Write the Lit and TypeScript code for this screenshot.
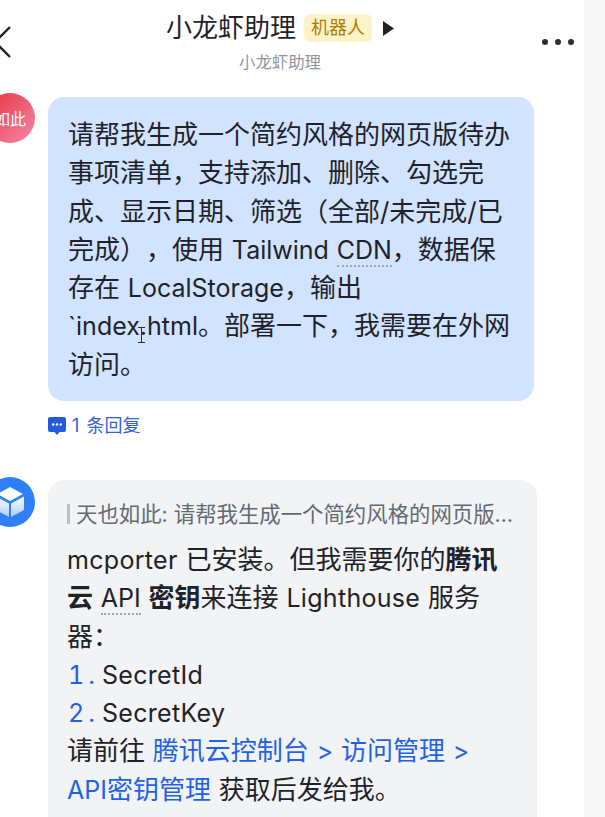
import { LitElement, html, css } from 'lit';
import { customElement } from 'lit/decorators.js';

@customElement('app-root')
export class AppRoot extends LitElement {
  static styles = css`
    :host {
      display: block;
      position: relative;
      width: 605px;
      height: 817px;
      overflow: hidden;
      background: #f7f7f8;
      font-family: "Inter", "Noto Sans CJK SC", sans-serif;
      color: #1f2329;
      text-spacing-trim: space-all;
    }
    svg { display: block; }
    .page {
      width: 584px;
      height: 817px;
      background: #fff;
      overflow: hidden;
    }
    .header {
      height: 97px;
      display: grid;
      grid-template-columns: 24px 1fr 48px;
    }
    .back { padding-top: 26px; margin-left: -6px; }
    .titles {
      display: flex;
      flex-direction: column;
      align-items: center;
      padding-top: 13px;
    }
    .title-row { display: flex; align-items: center; gap: 8px; height: 30px; }
    .title { font-size: 26px; line-height: 30px; }
    .tag {
      background: #fdf3c9;
      color: #b07d00;
      font-size: 18px;
      line-height: 28px;
      padding: 0 7px;
      border-radius: 6px;
    }
    .arrow { margin-left: 3px; }
    .sub { font-size: 16.4px; color: #8f959e; line-height: 22px; margin-top: 8px; }
    .more { padding-top: 38px; margin-left: 6px; }
    .row { display: flex; }
    .avatar-wrap { width: 48px; flex: none; position: relative; }
    .avatar {
      position: absolute;
      left: -15px;
      top: -4px;
      width: 50px;
      height: 50px;
      border-radius: 50%;
      background: linear-gradient(135deg, #e8313f, #f58aa8);
      color: #fff;
      font-size: 16px;
      display: flex;
      align-items: center;
      justify-content: center;
      white-space: nowrap;
    }
    .avatar.bot { top: -3px; background: #2f80f8; }
    .bubble {
      box-sizing: border-box;
      width: 486px;
      height: 304px;
      background: #d1e3ff;
      border-radius: 16px;
      padding: 19px 20px 0;
      font-size: 26px;
      line-height: 38.3px;
      word-spacing: 0.5px;
      white-space: nowrap;
    }
    .en { font-size: 25px; }
    .wide { letter-spacing: 0.3px; }
    .hint { border-bottom: 2px dotted #a0a5ad; }
    .reply {
      display: flex;
      align-items: center;
      gap: 6px;
      margin: 15px 0 0 48px;
      height: 20px;
      color: #2f62e0;
      font-size: 18px;
      line-height: 20px;
      word-spacing: 2px;
    }
    .bot-row { margin-top: 44px; }
    .card {
      box-sizing: border-box;
      width: 489px;
      height: 400px;
      background: #f2f3f5;
      border-radius: 16px;
      padding: 19px 19px 0;
      font-size: 26px;
      line-height: 38.3px;
      word-spacing: 0.5px;
      white-space: nowrap;
    }
    .quote {
      display: flex;
      align-items: center;
      gap: 6px;
      color: #646a73;
      font-size: 21.4px;
      line-height: 30px;
      margin-bottom: 12px;
      word-spacing: 0;
    }
    .quote i { width: 3px; height: 20px; background: #bbbfc4; flex: none; }
    b { font-weight: 700; }
    .item { display: flex; height: 38.3px; }
    .num {
      color: #1f62ea;
      display: flex;
      justify-content: flex-end;
      gap: 4px;
      width: 28px;
      margin-right: 7px;
      font-size: 25px;
      font-variant-numeric: tabular-nums;
    }
    .link { color: #1f62ea; }
    .cursor { position: absolute; left: 138px; top: 327px; }
  `;

  render() {
    return html`
      <div class="page">
        <div class="header">
          <div class="back">
            <svg width="18" height="32" viewBox="0 0 18 32">
              <path d="M16 1 L1 16 L16 31" fill="none" stroke="#1f2329" stroke-width="2.4" />
            </svg>
          </div>
          <div class="titles">
            <div class="title-row">
              <span class="title">小龙虾助理</span>
              <span class="tag">机器人</span>
              <svg class="arrow" width="11" height="15" viewBox="0 0 11 15"><path d="M0 0 L11 7.5 L0 15 Z" fill="#1f2329" /></svg>
            </div>
            <div class="sub">小龙虾助理</div>
          </div>
          <div class="more">
            <svg width="32" height="8" viewBox="0 0 32 8">
              <circle cx="3" cy="4" r="3" fill="#2b2f36" /><circle cx="16" cy="4" r="3" fill="#2b2f36" /><circle cx="29" cy="4" r="3" fill="#2b2f36" />
            </svg>
          </div>
        </div>
        <div class="row">
          <div class="avatar-wrap"><div class="avatar">如此</div></div>
          <div class="bubble">
            请帮我生成一个简约风格的网页版待办<br />
            事项清单，支持添加、删除、勾选完<br />
            成、显示日期、筛选（全部/未完成/已<br />
            完成），使用 <span class="en">Tailwind</span> <span class="en hint">CDN</span>，数据保<br />
            存在 <span class="en">LocalStorage</span>，输出<br />
            <span class="en">\`index.html</span>。部署一下，我需要在外网<br />
            访问。
          </div>
        </div>
        <div class="reply">
          <svg width="18" height="18" viewBox="0 0 18 18">
            <path d="M2 0 H16 A2 2 0 0 1 18 2 V13 A2 2 0 0 1 16 15 H11.5 L9 18 L6.5 15 H2 A2 2 0 0 1 0 13 V2 A2 2 0 0 1 2 0 Z" fill="#245bdb" />
            <circle cx="5.2" cy="7.5" r="1.2" fill="#fff" /><circle cx="9" cy="7.5" r="1.2" fill="#fff" /><circle cx="12.8" cy="7.5" r="1.2" fill="#fff" />
          </svg>
          <span>1 条回复</span>
        </div>
        <div class="row bot-row">
          <div class="avatar-wrap">
            <div class="avatar bot">
              <svg width="32" height="32" viewBox="0 0 32 32">
                <defs>
                  <linearGradient id="side" x1="0" y1="0" x2="0" y2="1">
                    <stop offset="0" stop-color="#ffffff" /><stop offset="1" stop-color="#a9ccff" />
                  </linearGradient>
                </defs>
                <path d="M16 1 L29 8 L16 15 L3 8 Z" fill="#fff" />
                <path d="M2 10.5 L15 17.5 V31 L2 24 Z" fill="url(#side)" />
                <path d="M30 10.5 L17 17.5 V31 L30 24 Z" fill="url(#side)" />
              </svg>
            </div>
          </div>
          <div class="card">
            <div class="quote"><i></i><span>天也如此: 请帮我生成一个简约风格的网页版…</span></div>
            <div>
              <span class="en wide">mcporter</span> 已安装。但我需要你的<b>腾讯</b><br />
              <b>云</b> <span class="en hint">API</span> <b>密钥</b>来连接 <span class="en wide">Lighthouse</span> 服务<br />
              器：
            </div>
            <div class="item"><span class="num"><span>1</span><span>.</span></span><span class="en wide">SecretId</span></div>
            <div class="item"><span class="num"><span>2</span><span>.</span></span><span class="en wide">SecretKey</span></div>
            <div>
              请前往 <span class="link">腾讯云控制台 <span class="en">&gt;</span> 访问管理 <span class="en">&gt;</span></span><br />
              <span class="link"><span class="en">API</span>密钥管理</span> 获取后发给我。
            </div>
          </div>
        </div>
      </div>
      <svg class="cursor" width="7" height="16" viewBox="0 0 7 16">
        <path d="M0 .5 H7 M0 15.5 H7 M3.5 .5 V15.5" fill="none" stroke="#3a2a10" stroke-width="1" />
      </svg>
    `;
  }
}
